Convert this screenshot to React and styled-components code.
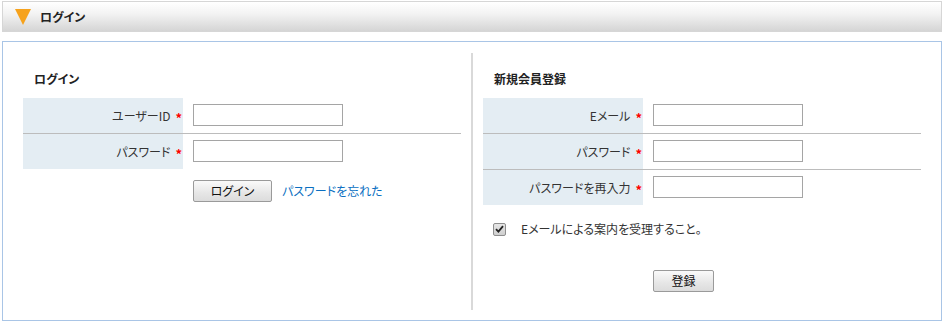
import React from 'react'
import styled, { createGlobalStyle } from 'styled-components'

const GlobalStyle = createGlobalStyle`
  body {
    margin: 0;
    background: #fff;
    font-family: "Noto Sans CJK JP", "Liberation Sans", sans-serif;
    font-size: 12px;
    font-feature-settings: "palt";
    color: #333;
  }
`

const Page = styled.div`
  width: 940px;
  padding: 1px 2px;
`

const TitleBar = styled.div`
  height: 29px;
  border: 1px solid #d6d6d6;
  background: linear-gradient(#ffffff 0%, #f3f3f3 40%, #d5d5d5 100%);
  display: flex;
  align-items: center;
  padding-left: 12px;
  gap: 9px;
`

const Triangle = styled.span`
  width: 0;
  height: 0;
  border-left: 8.5px solid transparent;
  border-right: 8.5px solid transparent;
  border-top: 16px solid #f6a21c;
`

const TitleText = styled.span`
  font-weight: bold;
  font-size: 12px;
  color: #222;
`

const Panel = styled.div`
  margin-top: 9px;
  border: 1px solid #a9c5e6;
  padding: 11px 20px 10px;
  box-sizing: border-box;
  height: 280px;
  display: grid;
  grid-template-columns: 448px 1fr;
`

const Column = styled.div`
  padding: ${p => (p.$right ? '0 0 0 10px' : '0 10px 0 0')};
  border-left: ${p => (p.$right ? '2px solid #d9d9d9' : 'none')};
`

const Heading = styled.div`
  font-weight: bold;
  line-height: 16px;
  padding: 18px 0 11px 11px;
  color: #222;
`

const Table = styled.div`
  display: flex;
  flex-direction: column;
`

const Row = styled.div`
  display: flex;
  align-items: center;
  height: 35px;
  & + & {
    border-top: 1px solid #bcbcbc;
  }
`

const Label = styled.div`
  width: 159px;
  height: 100%;
  background: #e4edf3;
  display: flex;
  align-items: center;
  justify-content: flex-end;
  padding-right: 1px;
  margin-right: 10px;
  line-height: 16px;
`

const Req = styled.span`
  color: #f00;
  margin-left: 5px;
  font-weight: bold;
  font-size: 13px;
  position: relative;
  top: 2px;
`

const Input = styled.input`
  width: 150px;
  height: 22px;
  box-sizing: border-box;
  border: 1px solid #a5a5a5;
  padding: 0 3px;
  margin: 0 0 1px;
  font: inherit;
`

const Actions = styled.div`
  display: flex;
  align-items: center;
  gap: 10px;
  padding-left: 170px;
  margin-top: ${p => p.$top || 0}px;
`

const Button = styled.button`
  width: ${p => p.$w}px;
  height: 22px;
  border: 1px solid #9a9a9a;
  border-radius: 2px;
  background: linear-gradient(#fafafa, #e6e6e6 60%, #dcdcdc);
  font: inherit;
  color: #111;
  padding: 0;
  line-height: 20px;
`

const Link = styled.a`
  color: #0b6fc1;
  text-decoration: none;
  line-height: 16px;
`

const CheckRow = styled.div`
  display: flex;
  align-items: center;
  padding-left: 10px;
  margin-top: 16px;
  line-height: 16px;
`

const CheckBox = styled.span`
  width: 11px;
  height: 11px;
  border: 1px solid #8e8e8e;
  border-radius: 2px;
  background: linear-gradient(#e6e6e6, #cfcfcf);
  display: flex;
  align-items: center;
  justify-content: center;
  margin-right: 15px;
`

export default function App() {
  return (
    <Page>
      <GlobalStyle />
      <TitleBar>
        <Triangle />
        <TitleText>ログイン</TitleText>
      </TitleBar>
      <Panel>
        <Column>
          <Heading>ログイン</Heading>
          <Table>
            <Row>
              <Label>ユーザーID<Req>*</Req></Label>
              <Input type="text" />
            </Row>
            <Row>
              <Label>パスワード<Req>*</Req></Label>
              <Input type="password" />
            </Row>
          </Table>
          <Actions $top={11}>
            <Button $w={79}>ログイン</Button>
            <Link href="#">パスワードを忘れた</Link>
          </Actions>
        </Column>
        <Column $right>
          <Heading>新規会員登録</Heading>
          <Table>
            <Row>
              <Label>Eメール<Req>*</Req></Label>
              <Input type="text" />
            </Row>
            <Row>
              <Label>パスワード<Req>*</Req></Label>
              <Input type="password" />
            </Row>
            <Row>
              <Label>パスワードを再入力<Req>*</Req></Label>
              <Input type="password" />
            </Row>
          </Table>
          <CheckRow>
            <CheckBox>
              <svg width="9" height="8" viewBox="0 0 9 8">
                <path d="M1 4.2 L3.4 6.6 L8 1.2" fill="none" stroke="#222" strokeWidth="1.8" />
              </svg>
            </CheckBox>
            Eメールによる案内を受理すること。
          </CheckRow>
          <Actions $top={33}>
            <Button $w={61}>登録</Button>
          </Actions>
        </Column>
      </Panel>
    </Page>
  )
}
